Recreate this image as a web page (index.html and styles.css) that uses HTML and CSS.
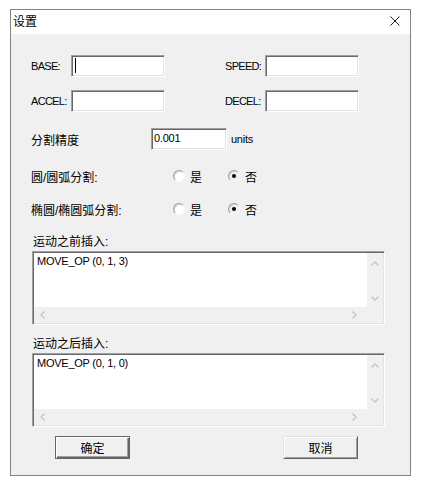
FILE: index.html
```html
<!DOCTYPE html>
<html lang="zh">
<head>
    <meta charset="UTF-8">
    <meta name="viewport" content="width=device-width, initial-scale=1.0">
    <title>设置</title>
    <link rel="stylesheet" href="styles.css">
</head>
<body>
    <div class="window">
        <div class="titlebar">
            <span class="title">设置</span>
            <svg class="close" width="10" height="10" viewBox="0 0 10 10">
                <path d="M0.5 0.5 L9.5 9.5 M9.5 0.5 L0.5 9.5" stroke="#1a1a1a" stroke-width="1" fill="none"/>
            </svg>
        </div>
        <div class="dialog">
            <div class="row pair-row">
                <span class="lbl lbl-short latin">BASE:</span>
                <div class="field field-short"><span class="caret"></span></div>
                <span class="lbl lbl-short lbl-right latin">SPEED:</span>
                <div class="field field-short"></div>
            </div>
            <div class="row pair-row row-accel">
                <span class="lbl lbl-short latin">ACCEL:</span>
                <div class="field field-short"></div>
                <span class="lbl lbl-short lbl-right latin">DECEL:</span>
                <div class="field field-short"></div>
            </div>
            <div class="row pair-row row-precision">
                <span class="lbl lbl-long">分割精度</span>
                <div class="field field-mid latin">0.001</div>
                <span class="unit latin">units</span>
            </div>
            <div class="row radio-row row-circle">
                <span class="lbl lbl-radio">圆/圆弧分割:</span>
                <span class="option"><span class="radio"></span>是</span>
                <span class="option"><span class="radio checked"></span>否</span>
            </div>
            <div class="row radio-row row-ellipse">
                <span class="lbl lbl-radio">椭圆/椭圆弧分割:</span>
                <span class="option"><span class="radio"></span>是</span>
                <span class="option"><span class="radio checked"></span>否</span>
            </div>

            <div class="memo-label memo-label-first">运动之前插入:</div>
            <div class="memo">
                <div class="memo-text latin">MOVE_OP (0, 1, 3)</div>
                <div class="vscroll">
                    <svg width="8" height="5" viewBox="0 0 8 5"><polyline points="0.5,4.5 4,1 7.5,4.5" stroke="#c4c4c4" stroke-width="1.3" fill="none"/></svg>
                    <svg width="8" height="5" viewBox="0 0 8 5"><polyline points="0.5,0.5 4,4 7.5,0.5" stroke="#c4c4c4" stroke-width="1.3" fill="none"/></svg>
                </div>
                <div class="hscroll">
                    <svg width="5" height="8" viewBox="0 0 5 8"><polyline points="4.5,0.5 1,4 4.5,7.5" stroke="#c4c4c4" stroke-width="1.3" fill="none"/></svg>
                    <svg width="5" height="8" viewBox="0 0 5 8"><polyline points="0.5,0.5 4,4 0.5,7.5" stroke="#c4c4c4" stroke-width="1.3" fill="none"/></svg>
                </div>
            </div>

            <div class="memo-label memo-label-second">运动之后插入:</div>
            <div class="memo">
                <div class="memo-text latin">MOVE_OP (0, 1, 0)</div>
                <div class="vscroll">
                    <svg width="8" height="5" viewBox="0 0 8 5"><polyline points="0.5,4.5 4,1 7.5,4.5" stroke="#c4c4c4" stroke-width="1.3" fill="none"/></svg>
                    <svg width="8" height="5" viewBox="0 0 8 5"><polyline points="0.5,0.5 4,4 7.5,0.5" stroke="#c4c4c4" stroke-width="1.3" fill="none"/></svg>
                </div>
                <div class="hscroll">
                    <svg width="5" height="8" viewBox="0 0 5 8"><polyline points="4.5,0.5 1,4 4.5,7.5" stroke="#c4c4c4" stroke-width="1.3" fill="none"/></svg>
                    <svg width="5" height="8" viewBox="0 0 5 8"><polyline points="0.5,0.5 4,4 0.5,7.5" stroke="#c4c4c4" stroke-width="1.3" fill="none"/></svg>
                </div>
            </div>

            <div class="buttons">
                <button class="btn btn-default">确定</button>
                <button class="btn btn-cancel">取消</button>
            </div>
        </div>
    </div>
</body>
</html>
```

FILE: styles.css
```css
body {
    margin: 0;
    background-color: #fff;
    font-family: "Liberation Sans", "Noto Sans CJK SC", sans-serif;
    font-size: 12px;
    color: #000;
}
.window {
    margin: 9px 0 0 10px;
    width: 401px;
    border: 1px solid #838383;
    box-sizing: border-box;
    background-color: #f0f0f0;
}
.titlebar {
    height: 24px;
    background-color: #fff;
    display: flex;
    align-items: center;
    justify-content: space-between;
    padding: 0 10px 0 2px;
}
.title {
    font-size: 12px;
    line-height: 12px;
    margin-top: -1px;
}
.close {
    display: block;
    margin-top: -2px;
}
.dialog {
    padding: 21px 0 16px 20px;
}
.latin {
    font-size: 11px;
    letter-spacing: -0.25px;
}
.lbl.latin {
    letter-spacing: -0.7px;
}
.row {
    display: flex;
    align-items: center;
}
.pair-row {
    height: 22px;
}
.row-accel {
    margin-top: 13px;
}
.row-precision {
    margin-top: 16px;
}
.lbl {
    white-space: nowrap;
}
.lbl-short {
    width: 40px;
}
.lbl-right {
    margin-left: 60px;
}
.lbl-long {
    width: 120px;
}
.field {
    height: 22px;
    box-sizing: border-box;
    background-color: #fff;
    border: 1px solid;
    border-color: #a0a0a0 #fff #fff #a0a0a0;
    box-shadow: inset 1px 1px #696969, inset -1px -1px #e3e3e3;
    position: relative;
    line-height: 18px;
    padding-left: 2px;
}
.field-short {
    width: 94px;
}
.field-mid {
    width: 76px;
}
.caret {
    position: absolute;
    left: 3px;
    top: 2px;
    width: 1px;
    height: 15px;
    background-color: #000;
}
.unit {
    margin-left: 4px;
}
.radio-row {
    height: 16px;
}
.row-circle {
    margin-top: 18px;
}
.row-ellipse {
    margin-top: 17px;
}
.lbl-radio {
    width: 142px;
}
.option {
    display: flex;
    align-items: center;
    gap: 5px;
    margin-right: 26px;
}
.radio {
    width: 12px;
    height: 12px;
    box-sizing: border-box;
    border-radius: 50%;
    border: 1px solid;
    border-color: #a0a0a0 #f8f8f8 #f8f8f8 #a0a0a0;
    background-color: #fff;
    box-shadow: inset 1px 1px #d4d4d4;
    position: relative;
}
.radio.checked {
    background-color: #f0f0f0;
}
.radio.checked::after {
    content: "";
    position: absolute;
    left: 3px;
    top: 3px;
    width: 4px;
    height: 4px;
    border-radius: 50%;
    background-color: #000;
}
.memo-label {
    height: 14px;
    line-height: 14px;
    padding-left: 2px;
    margin-bottom: 2px;
}
.memo-label-first {
    margin-top: 18px;
}
.memo-label-second {
    margin-top: 12px;
}
.memo {
    margin-left: 1px;
    width: 353px;
    height: 74px;
    box-sizing: border-box;
    border: 1px solid;
    border-color: #a0a0a0 #fff #fff #a0a0a0;
    box-shadow: inset 1px 1px #696969, inset -1px -1px #e3e3e3;
    padding: 1px;
    display: grid;
    grid-template-columns: 1fr 16px;
    grid-template-rows: 1fr 16px;
    background-color: #f0f0f0;
}
.memo-text {
    background-color: #fff;
    padding: 2px 0 0 3px;
    line-height: 13px;
}
.vscroll {
    display: flex;
    flex-direction: column;
    justify-content: space-between;
    align-items: center;
    padding: 8px 0 6px;
}
.hscroll {
    grid-column: 1 / 3;
    display: flex;
    justify-content: space-between;
    align-items: center;
    padding: 0 26px 0 6px;
}
.vscroll svg, .hscroll svg {
    display: block;
}
.buttons {
    display: flex;
    margin-top: 9px;
    padding-left: 24px;
}
.btn {
    width: 75px;
    height: 23px;
    box-sizing: border-box;
    font-family: "Liberation Sans", "Noto Sans CJK SC", sans-serif;
    font-size: 12px;
    background-color: #f0f0f0;
    padding: 0;
    cursor: pointer;
}
.btn-default {
    border: 1px solid #646464;
    box-shadow: inset 1px 1px #fff, inset -1px -1px #646464, inset -2px -2px #a0a0a0;
}
.btn-cancel {
    margin-left: 153px;
    border: 1px solid;
    border-color: #e3e3e3 #646464 #646464 #e3e3e3;
    box-shadow: inset 1px 1px #fff, inset -1px -1px #a0a0a0;
}
```
